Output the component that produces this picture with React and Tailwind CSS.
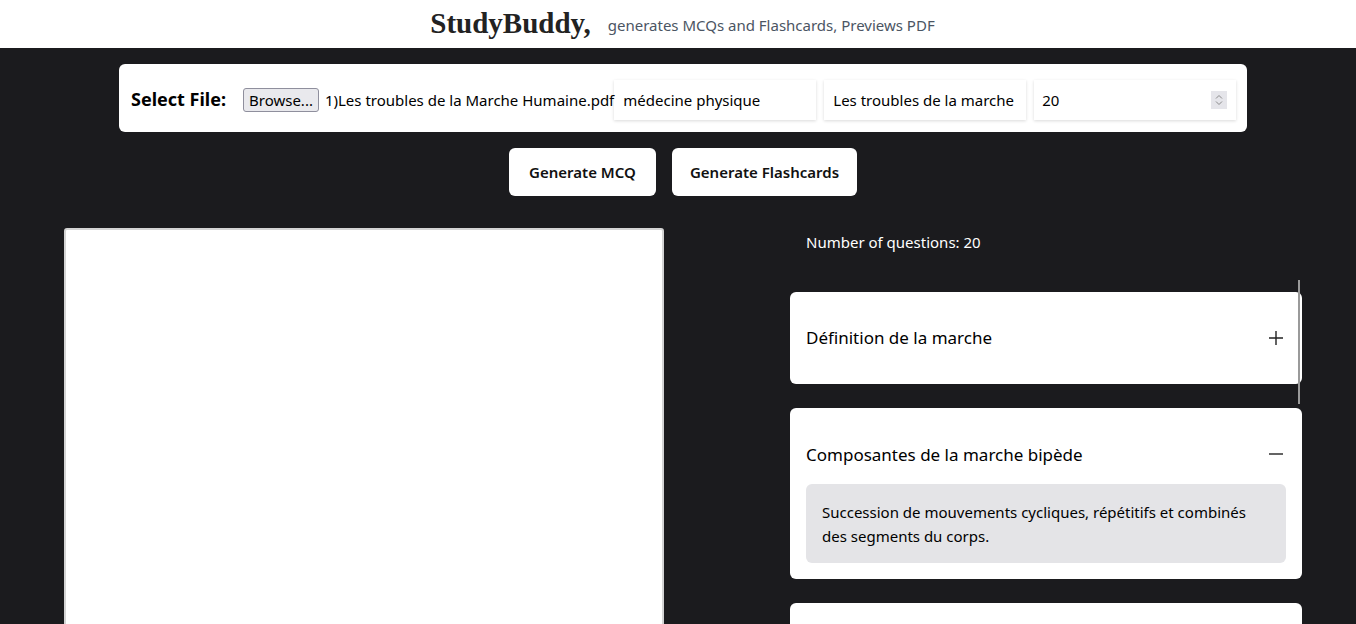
import React from 'react';

const font = { fontFamily: '"Segoe UI", "Noto Sans", sans-serif' };

const Plus = () => (
  <svg width="14" height="14" viewBox="0 0 14 14" className="mr-[3px]">
    <path d="M7 0v14M0 7h14" stroke="#222" strokeWidth="1.4" fill="none" />
  </svg>
);

const Minus = () => (
  <svg width="14" height="14" viewBox="0 0 14 14" className="mr-[3px]">
    <path d="M0 7h14" stroke="#222" strokeWidth="1.4" fill="none" />
  </svg>
);

const Accordion = ({ title, open, children }) => (
  <div className="bg-white rounded-md px-4">
    <div className={`flex items-center justify-between ${open ? 'pt-[34px] pb-[17px]' : 'h-[92px]'}`}>
      <span className="text-[17px] text-black">{title}</span>
      {title && (open ? <Minus /> : <Plus />)}
    </div>
    {open && (
      <div className="bg-[#e4e4e7] rounded-md px-4 pt-4 pb-[15px] mb-4 text-[15px] leading-6 text-black">
        {children}
      </div>
    )}
  </div>
);

export default function App() {
  return (
    <div className="bg-[#1b1b1e] overflow-hidden h-[624px]" style={font}>
      <header className="h-12 bg-white flex items-center justify-center gap-[17px]">
        <span className="text-[29px] font-bold text-[#222] ml-[9px]" style={{ fontFamily: '"Liberation Serif", serif' }}>StudyBuddy,</span>
        <span className="text-[15px] text-[#4b5563] mt-[2px]">generates MCQs and Flashcards, Previews PDF</span>
      </header>

      <div className="pl-[119px] pr-[109px] pt-4">
        <div className="bg-white rounded-md h-[68px] flex items-center pl-3 pr-3 pt-[4px] whitespace-nowrap">
          <span className="text-[18px] font-bold text-black mr-[17px] -mt-[2px] shrink-0">Select File:</span>
          <button className="border border-[#8f8f9d] bg-[#e9e9ed] rounded-[3px] px-[5px] h-[24px] text-[15px] text-black leading-none mr-[6px] shrink-0">Browse...</button>
          <span className="text-[15px] text-black shrink-0">1)Les troubles de la Marche Humaine.pdf</span>
          <div className="flex gap-2 ml-auto shrink-0">
            <div className="w-[202px] h-[40px] shadow-[0_1px_3px_rgba(0,0,0,0.15)] flex items-center px-[9px] text-[15px] text-black">médecine physique</div>
            <div className="w-[202px] h-[40px] shadow-[0_1px_3px_rgba(0,0,0,0.15)] flex items-center px-[9px] text-[15px] text-black">Les troubles de la marche</div>
            <div className="w-[202px] h-[40px] shadow-[0_1px_3px_rgba(0,0,0,0.15)] flex items-center justify-between pl-2 pr-[9px] text-[15px] text-black">
              <span>20</span>
              <span className="w-[16px] h-[18px] bg-[#e5e5ea] flex flex-col items-center justify-center">
                <svg width="8" height="12" viewBox="0 0 8 12">
                  <path d="M1 4.5L4 1.5L7 4.5M1 7.5L4 10.5L7 7.5" stroke="#8a8a8a" strokeWidth="1" fill="none" />
                </svg>
              </span>
            </div>
          </div>
        </div>
      </div>

      <div className="flex justify-center gap-4 mt-4 pl-[10px]">
        <button className="bg-white rounded-md w-[147px] h-[48px] text-[15px] font-semibold text-[#111]">Generate MCQ</button>
        <button className="bg-white rounded-md w-[185px] h-[48px] text-[15px] font-semibold text-[#111]">Generate Flashcards</button>
      </div>

      <div className="flex mt-8 pl-[64px] pr-[54px]">
        <div className="w-[600px] h-[500px] bg-white border-2 border-[#d4d4d4] rounded-[3px]" />
        <div className="ml-auto w-[512px] relative">
          <div className="text-[15px] text-white pl-4 mt-[3px]">Number of questions: 20</div>
          <div className="absolute right-[2px] top-[52px] w-[2px] h-[124px] bg-[#9a9a9a]" />
          <div className="flex flex-col gap-6 mt-[38px]">
            <Accordion title="Définition de la marche" />
            <Accordion title="Composantes de la marche bipède" open>
              Succession de mouvements cycliques, répétitifs et combinés des segments du corps.
            </Accordion>
            <Accordion title="" />
          </div>
        </div>
      </div>
    </div>
  );
}
